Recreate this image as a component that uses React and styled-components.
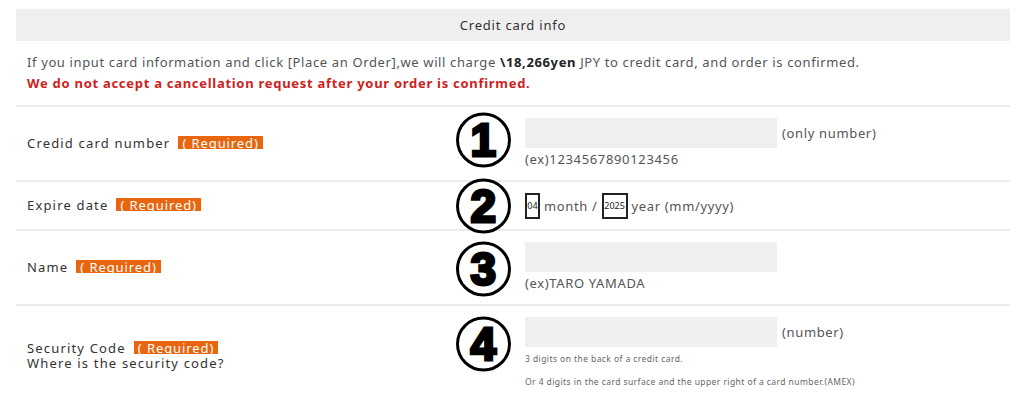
import React from 'react';
import styled, { createGlobalStyle } from 'styled-components';

const GlobalStyle = createGlobalStyle`
  body {
    margin: 0;
    background: #fff;
    font-family: "Noto Sans", "Liberation Sans", sans-serif;
    color: #444;
  }
`;

const Page = styled.div`
  padding: 9px 14px 0 16px;
  width: 994px;
`;

const Heading = styled.div`
  height: 32px;
  background: #efefef;
  display: flex;
  align-items: center;
  justify-content: center;
  font-size: 13px;
  letter-spacing: 0.06em;
  color: #333;
`;

const Notice = styled.div`
  padding: 11px 11px 11px;
  font-size: 13px;
  line-height: 21px;
  letter-spacing: 0.048em;
  color: #555;
  border-bottom: 2px solid #ececec;
`;

const Strong = styled.b`
  color: #222;
`;

const Warning = styled.div`
  color: #cc2222;
  font-weight: 700;
  letter-spacing: 0.055em;
`;

const Row = styled.div`
  display: grid;
  grid-template-columns: 439px 1fr;
  min-height: ${p => p.$h}px;
  border-bottom: ${p => (p.$last ? 'none' : '2px solid #ececec')};
`;

const LabelCell = styled.div`
  display: flex;
  flex-direction: column;
  justify-content: center;
  padding-left: 11px;
  padding-top: ${p => p.$pt || 0}px;
  font-size: 13px;
  line-height: 15px;
  letter-spacing: 0.09em;
  color: #333;
`;

const Badge = styled.span`
  display: inline-block;
  margin-left: 8px;
  padding: 1px 4px 0;
  background: #e8660f;
  color: #fff;
  font-size: 13px;
  line-height: 12px;
  letter-spacing: 0.07em;
`;

const ValueCell = styled.div`
  position: relative;
  display: flex;
  flex-direction: column;
  justify-content: ${p => (p.$center ? 'center' : 'flex-start')};
  padding-left: 70px;
  padding-top: ${p => (p.$center ? 0 : 11)}px;
  padding-bottom: ${p => (p.$center ? 0 : 10)}px;
  font-size: 13px;
  letter-spacing: 0.05em;
  color: #555;
`;

const Marker = styled.span`
  position: absolute;
  left: 1px;
  top: 50%;
  transform: translateY(calc(-50% + ${p => p.$shift || 0}px));
  width: 49px;
  height: 49px;
  border: 3px solid #000;
  border-radius: 50%;
  display: flex;
  align-items: center;
  justify-content: center;
  font-family: "Liberation Sans", Arial, sans-serif;
  font-weight: 700;
  font-size: 46px;
  color: #000;
  -webkit-text-stroke: 3px #000;
  background: #fff;
`;

const Line = styled.div`
  display: flex;
  align-items: center;
  gap: ${p => p.$gap || 5}px;
`;

const Field = styled.div`
  width: 252px;
  height: 30px;
  background: #efefef;
`;

const Hint = styled.div`
  margin-top: 3px;
  line-height: 16px;
`;

const Small = styled.div`
  font-size: 8.5px;
  letter-spacing: 0.05em;
  color: #666;
  margin-top: ${p => p.$top}px;
  line-height: 10px;
`;

const TinyBox = styled.span`
  display: inline-flex;
  align-items: center;
  justify-content: center;
  width: ${p => p.$w}px;
  height: 26px;
  box-sizing: border-box;
  border: 2px solid #222;
  font-size: 9px;
  letter-spacing: 0;
  color: #222;
`;

export default function App() {
  return (
    <Page>
      <GlobalStyle />
      <Heading>Credit card info</Heading>
      <Notice>
        If you input card information and click [Place an Order],we will charge{' '}
        <Strong>\18,266yen</Strong> JPY to credit card, and order is confirmed.
        <Warning>We do not accept a cancellation request after your order is confirmed.</Warning>
      </Notice>

      <Row $h={73}>
        <LabelCell>
          <div>Credid card number<Badge>( Required)</Badge></div>
        </LabelCell>
        <ValueCell>
          <Marker $shift={-4}>1</Marker>
          <Line>
            <Field />
            <span>(only number)</span>
          </Line>
          <Hint>(ex)1234567890123456</Hint>
        </ValueCell>
      </Row>

      <Row $h={47}>
        <LabelCell>
          <div>Expire date<Badge>( Required)</Badge></div>
        </LabelCell>
        <ValueCell $center>
          <Marker>2</Marker>
          <Line $gap={4}>
            <TinyBox $w={15}>04</TinyBox>
            <span>month /</span>
            <TinyBox $w={26}>2025</TinyBox>
            <span>year (mm/yyyy)</span>
          </Line>
        </ValueCell>
      </Row>

      <Row $h={73}>
        <LabelCell>
          <div>Name<Badge>( Required)</Badge></div>
        </LabelCell>
        <ValueCell>
          <Marker $shift={1}>3</Marker>
          <Field />
          <Hint>(ex)TARO YAMADA</Hint>
        </ValueCell>
      </Row>

      <Row $h={95} $last>
        <LabelCell $pt={4}>
          <div>Security Code<Badge>( Required)</Badge></div>
          <div>Where is the security code?</div>
        </LabelCell>
        <ValueCell>
          <Marker $shift={-10}>4</Marker>
          <Line>
            <Field />
            <span>(number)</span>
          </Line>
          <Small $top={7}>3 digits on the back of a credit card.</Small>
          <Small $top={13}>Or 4 digits in the card surface and the upper right of a card number.(AMEX)</Small>
        </ValueCell>
      </Row>
    </Page>
  );
}
